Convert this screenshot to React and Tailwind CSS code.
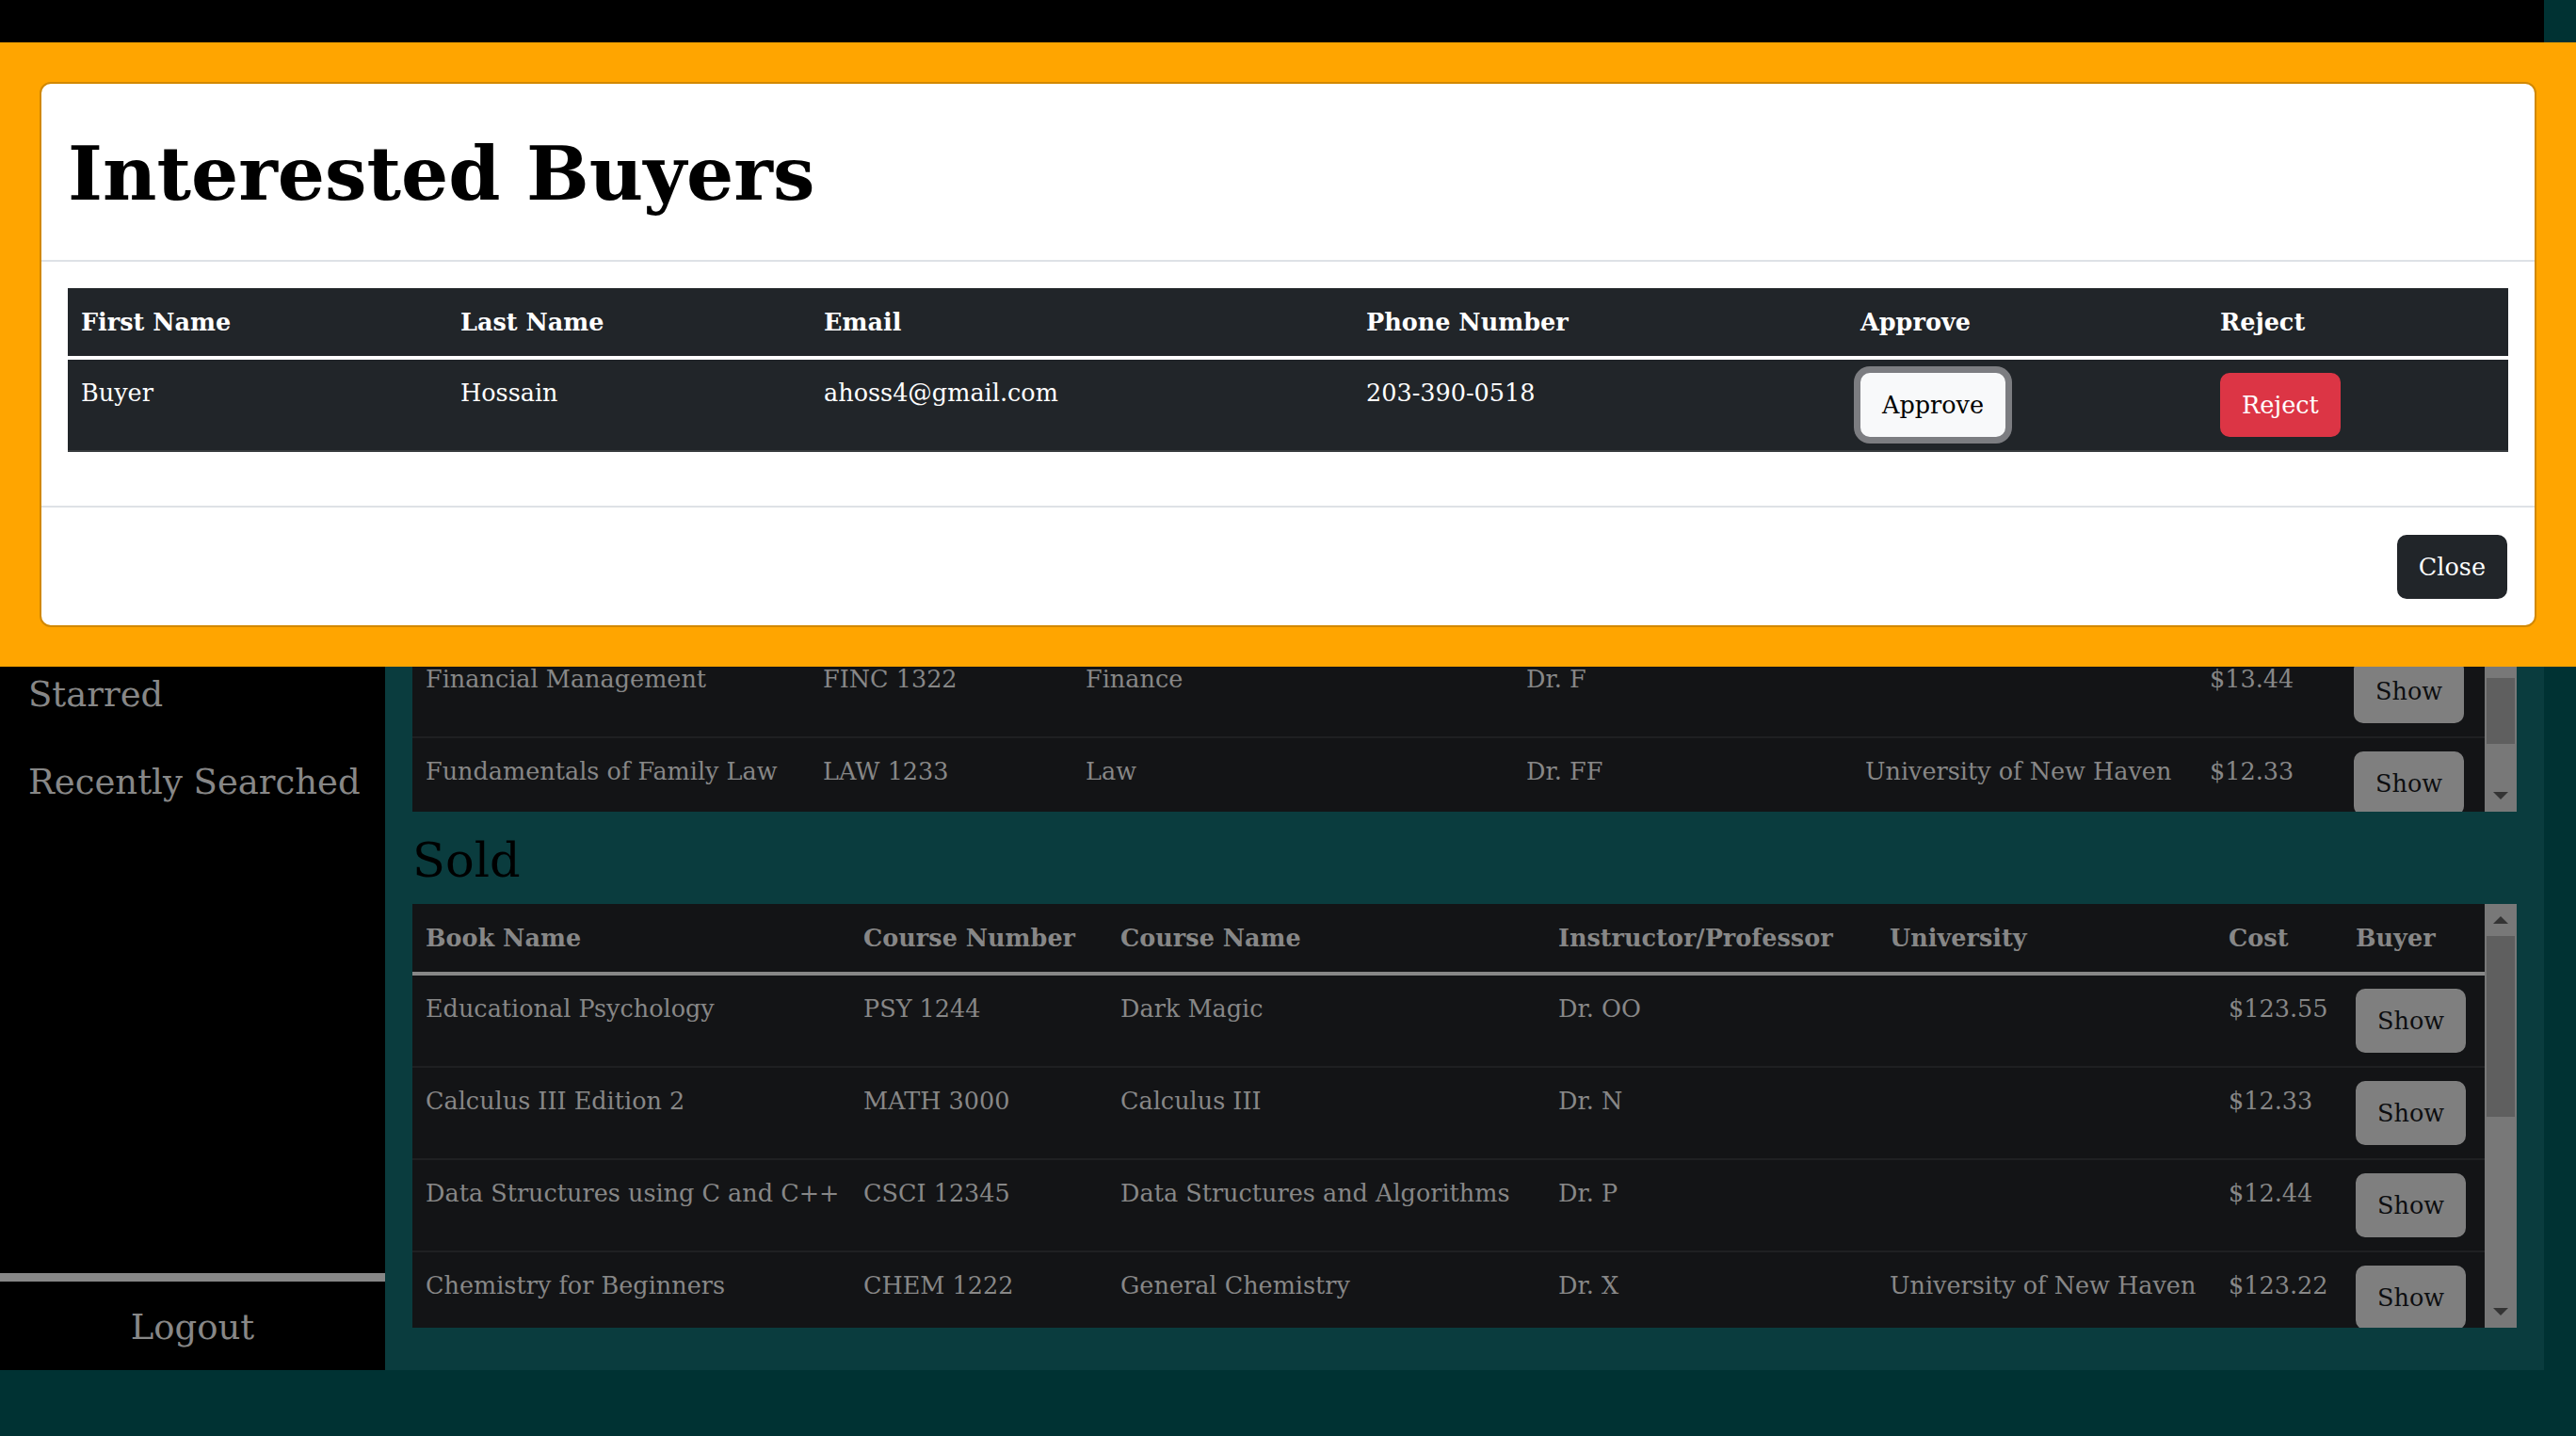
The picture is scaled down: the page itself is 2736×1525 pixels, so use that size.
import React from 'react';

const listedRows = [
  { book: 'Financial Management', num: 'FINC 1322', course: 'Finance', prof: 'Dr. F', uni: '', cost: '$13.44' },
  { book: 'Fundamentals of Family Law', num: 'LAW 1233', course: 'Law', prof: 'Dr. FF', uni: 'University of New Haven', cost: '$12.33' },
];

const soldRows = [
  { book: 'Educational Psychology', num: 'PSY 1244', course: 'Dark Magic', prof: 'Dr. OO', uni: '', cost: '$123.55' },
  { book: 'Calculus III Edition 2', num: 'MATH 3000', course: 'Calculus III', prof: 'Dr. N', uni: '', cost: '$12.33' },
  { book: 'Data Structures using C and C++', num: 'CSCI 12345', course: 'Data Structures and Algorithms', prof: 'Dr. P', uni: '', cost: '$12.44' },
  { book: 'Chemistry for Beginners', num: 'CHEM 1222', course: 'General Chemistry', prof: 'Dr. X', uni: 'University of New Haven', cost: '$123.22' },
];

const headers = ['Book Name', 'Course Number', 'Course Name', 'Instructor/Professor', 'University', 'Cost', 'Buyer'];

const Scrollbar = ({ thumb }) => (
  <div className="flex w-[34px] shrink-0 flex-col bg-[#787878]">
    <div className="flex h-[34px] items-center justify-center">
      <svg width="16" height="8" viewBox="0 0 16 8">
        <polygon points="0,8 16,8 8,0" fill="#343434" />
      </svg>
    </div>
    <div className="flex-1">
      <div className={`mx-auto w-[30px] bg-[#5f5f5f] ${thumb}`} />
    </div>
    <div className="flex h-[34px] items-center justify-center">
      <svg width="16" height="8" viewBox="0 0 16 8">
        <polygon points="0,0 16,0 8,8" fill="#343434" />
      </svg>
    </div>
  </div>
);

const BookTable = ({ rows, cols, height, thumb, showHead = true }) => (
  <div className={`flex overflow-hidden bg-[#131416] ${height}`}>
    <div className="flex-1 overflow-hidden">
      <table className="w-full table-fixed border-collapse text-left text-[25.5px] text-[#878787]">
        <colgroup>
          {cols.map((c, i) => (
            <col key={i} className={c} />
          ))}
        </colgroup>
        {showHead && (
          <thead>
            <tr className="border-b-4 border-[#878787]">
              {headers.map((h) => (
                <th key={h} className="whitespace-nowrap px-[14px] py-[15px] align-top font-bold leading-[42px]">
                  {h}
                </th>
              ))}
            </tr>
          </thead>
        )}
        <tbody>
          {rows.map((r) => (
            <tr key={r.book} className="border-b-2 border-[#1f2022]">
              <td className="whitespace-nowrap px-[14px] py-[14px] align-top leading-[42px]">{r.book}</td>
              <td className="whitespace-nowrap px-[14px] py-[14px] align-top leading-[42px]">{r.num}</td>
              <td className="whitespace-nowrap px-[14px] py-[14px] align-top leading-[42px]">{r.course}</td>
              <td className="whitespace-nowrap px-[14px] py-[14px] align-top leading-[42px]">{r.prof}</td>
              <td className="whitespace-nowrap px-[14px] py-[14px] align-top leading-[42px]">{r.uni}</td>
              <td className="whitespace-nowrap px-[14px] py-[14px] align-top leading-[42px]">{r.cost}</td>
              <td className="px-[14px] py-[14px] align-top">
                <button className="rounded-[10px] border-2 border-[#7f7f7f] bg-[#7f7f7f] px-[21px] py-[11px] leading-[42px] text-[#0d0e10]">
                  Show
                </button>
              </td>
            </tr>
          ))}
        </tbody>
      </table>
    </div>
    <Scrollbar thumb={thumb} />
  </div>
);

const App = () => {
  return (
    <div className="relative h-[1525px] w-full overflow-hidden bg-[#003233] font-['DejaVu_Serif',serif]">
      <div className="flex h-[1455px] w-[2702px] flex-col">
        <nav className="h-[45px] shrink-0 bg-black" />
        <div className="flex flex-1">
          <aside className="flex w-[409px] shrink-0 flex-col bg-black text-[37px] text-[#878787]">
            {/* top of the list sits under the modal */}
            <ul className="px-[30px] pt-[646px]">
              <li className="py-[19px] leading-[55px]">Starred</li>
              <li className="whitespace-nowrap py-[19px] leading-[55px]">Recently Searched</li>
            </ul>
            <div className="mt-auto flex h-[103px] items-center justify-center border-t-[9px] border-[#878787] pt-[3px]">
              Logout
            </div>
          </aside>

          <main className="flex flex-1 flex-col justify-end bg-[#0a3c3e] px-[29px] pb-[45px]">
            {/* listed books, scrolled down to its last rows */}
            <BookTable
              rows={listedRows}
              showHead={false}
              height="h-[176px]"
              thumb="h-[70px]"
              cols={['w-[422px]', 'w-[279px]', 'w-[468px]', 'w-[360px]', 'w-[366px]', 'w-[153px]', 'w-[153px]']}
            />
            <h2 className="mb-[16px] mt-[21px] text-[51px] leading-[61px] text-black">Sold</h2>
            <BookTable
              rows={soldRows}
              height="h-[450px]"
              thumb="h-[192px]"
              cols={['w-[465px]', 'w-[273px]', 'w-[465px]', 'w-[352px]', 'w-[360px]', 'w-[135px]', 'w-[151px]']}
            />
          </main>
        </div>
      </div>

      {/* modal */}
      <div className="absolute inset-x-0 top-[45px] bg-[#ffa500] p-[42px]">
        <div className="rounded-[12px] border-2 border-[#d28800] bg-white">
          <div className="border-b-2 border-[#dee2e6] px-[28px] pb-[26px] pt-[30px]">
            <h1 className="text-[79px] font-bold leading-[131px] text-black">Interested Buyers</h1>
          </div>
          <div className="px-[28px] pb-[57px] pt-[28px]">
            <table className="w-full table-fixed border-collapse bg-[#212529] text-left text-[25.5px] text-white">
              <colgroup>
                <col className="w-[403px]" />
                <col className="w-[386px]" />
                <col className="w-[576px]" />
                <col className="w-[525px]" />
                <col className="w-[382px]" />
                <col className="w-[320px]" />
              </colgroup>
              <thead>
                <tr className="border-b-4 border-white">
                  <th className="px-[14px] py-[15px] font-bold leading-[42px]">First Name</th>
                  <th className="px-[14px] py-[15px] font-bold leading-[42px]">Last Name</th>
                  <th className="px-[14px] py-[15px] font-bold leading-[42px]">Email</th>
                  <th className="px-[14px] py-[15px] font-bold leading-[42px]">Phone Number</th>
                  <th className="px-[14px] py-[15px] font-bold leading-[42px]">Approve</th>
                  <th className="px-[14px] py-[15px] font-bold leading-[42px]">Reject</th>
                </tr>
              </thead>
              <tbody>
                <tr className="border-b-2 border-[#373b3e]">
                  <td className="px-[14px] py-[14px] align-top leading-[42px]">Buyer</td>
                  <td className="px-[14px] py-[14px] align-top leading-[42px]">Hossain</td>
                  <td className="px-[14px] py-[14px] align-top leading-[42px]">ahoss4@gmail.com</td>
                  <td className="px-[14px] py-[14px] align-top leading-[42px]">203-390-0518</td>
                  <td className="px-[14px] py-[14px] align-top">
                    <button className="rounded-[10px] border-2 border-[#f8f9fa] bg-[#f8f9fa] px-[21px] py-[11px] leading-[42px] text-black ring-[7px] ring-[#7c7d81]">
                      Approve
                    </button>
                  </td>
                  <td className="px-[14px] py-[14px] align-top">
                    <button className="rounded-[10px] border-2 border-[#dc3545] bg-[#dc3545] px-[21px] py-[11px] leading-[42px] text-white">
                      Reject
                    </button>
                  </td>
                </tr>
              </tbody>
            </table>
          </div>
          <div className="flex justify-end border-t-2 border-[#dee2e6] px-[29px] pb-[28px] pt-[29px]">
            <button className="rounded-[10px] border-2 border-[#212529] bg-[#212529] px-[21px] py-[11px] text-[25.5px] leading-[42px] text-white">
              Close
            </button>
          </div>
        </div>
      </div>
    </div>
  );
};

export default App;
